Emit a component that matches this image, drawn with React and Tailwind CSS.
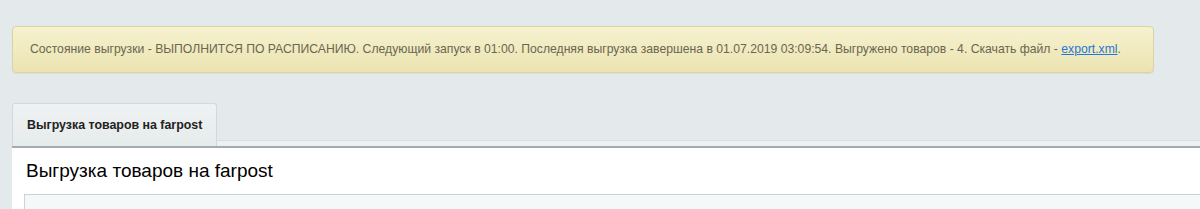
export default function App() {
  return (
    <div className="w-[1200px] h-[209px] overflow-hidden bg-[#e4eaec] font-['Liberation_Sans',Arial,sans-serif]">
      <div className="pt-[26px] pl-3 pr-[46px]">
        <div className="h-[47px] flex items-center px-[17px] rounded-[4px] border border-[#dcd3a4] bg-gradient-to-b from-[#f6f2cf] to-[#ebe3b0] shadow-[0_1px_1px_rgba(0,0,0,0.05)] text-[12.2px] text-[#6a6650] whitespace-nowrap">
          <span>
            Состояние выгрузки - ВЫПОЛНИТСЯ ПО РАСПИСАНИЮ. Следующий запуск в 01:00. Последняя выгрузка завершена в 01.07.2019 03:09:54. Выгружено товаров - 4. Скачать файл -{' '}
            <a href="#" className="text-[#2675d7] underline">export.xml</a>.
          </span>
        </div>
      </div>

      <div className="mt-[30px] pl-3">
        <div className="flex items-end">
          <div className="w-[205px] h-[43px] flex items-center pl-[14px] rounded-t-[3px] border border-b-0 border-[#d3d9db] bg-gradient-to-b from-[#eff2f2] to-[#e6ebec] text-[12.4px] font-bold text-[#222]">
            Выгрузка товаров на farpost
          </div>
          <div className="flex-1 h-[6px] bg-[#edf1f2] border-t border-[#d9dfe0]" />
        </div>
        <div className="border-t-2 border-[#a3abae] bg-white">
          <div className="h-[46px] flex items-center pl-[14px] text-[19px] text-black">
            Выгрузка товаров на farpost
          </div>
          <div className="ml-3 h-[20px] border-t border-l border-[#c9d4d7] bg-[#f5f8f8]" />
        </div>
      </div>
    </div>
  )
}
